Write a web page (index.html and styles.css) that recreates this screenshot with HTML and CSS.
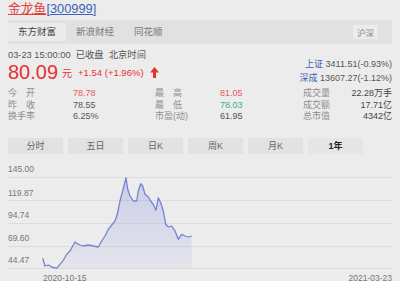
FILE: index.html
```html
<!DOCTYPE html>
<html>
<head>
<meta charset="utf-8">
<link rel="stylesheet" href="styles.css">
</head>
<body>
<div class="page">
  <div class="title"><a class="name">金龙鱼</a><a class="code">[300999]</a></div>
  <div class="tabbar">
    <span class="tab active">东方财富</span>
    <span class="tab">新浪财经</span>
    <span class="tab">同花顺</span>
    <span class="spacer"></span>
    <span class="market">沪深</span>
  </div>
  <div class="quote">
    <div class="qleft">
      <div class="time">03-23 15:00:00&nbsp; 已收盘&nbsp; 北京时间</div>
      <div class="priceline">
        <span class="price">80.09</span><span class="yuan">元</span>
        <span class="chg">+1.54 (+1.96%)</span>
        <svg class="arrow" width="9" height="11" viewBox="0 0 9 11"><path d="M4.5 0 L9 5.5 L6 5.5 L6 11 L3 11 L3 5.5 L0 5.5 Z" fill="#e5322f"/></svg>
      </div>
    </div>
    <div class="qright">
      <div class="idx"><span class="iname">上证</span> 3411.51(-0.93%)</div>
      <div class="idx"><span class="iname">深成</span> 13607.27(-1.12%)</div>
    </div>
  </div>
  <div class="stats">
    <span class="lb">今&emsp;开</span><span class="up">78.78</span>
    <span class="lb">最&emsp;高</span><span class="up">81.05</span>
    <span class="lb">成交量</span><span class="rv">22.28万手</span>
    <span class="lb">昨&emsp;收</span><span>78.55</span>
    <span class="lb">最&emsp;低</span><span class="down">78.03</span>
    <span class="lb">成交额</span><span class="rv">17.71亿</span>
    <span class="lb">换手率</span><span>6.25%</span>
    <span class="lb">市盈(动)</span><span>61.95</span>
    <span class="lb">总市值</span><span class="rv">4342亿</span>
  </div>
  <div class="periods">
    <span class="btn">分时</span>
    <span class="btn">五日</span>
    <span class="btn">日K</span>
    <span class="btn">周K</span>
    <span class="btn">月K</span>
    <span class="btn on">1年</span>
  </div>
  <svg class="chart" width="384" height="121" viewBox="0 0 384 121">
    <defs>
      <linearGradient id="fill" x1="0" y1="0" x2="0" y2="1">
        <stop offset="0" stop-color="#8b95e0" stop-opacity="0.35"/>
        <stop offset="1" stop-color="#8b95e0" stop-opacity="0.08"/>
      </linearGradient>
    </defs>
    <g stroke="#dcdcdf" stroke-width="1">
      <line x1="0" y1="16.5" x2="384" y2="16.5"/>
      <line x1="0" y1="39.5" x2="384" y2="39.5"/>
      <line x1="0" y1="62.5" x2="384" y2="62.5"/>
      <line x1="0" y1="85.5" x2="384" y2="85.5"/>
      <line x1="0" y1="107.5" x2="384" y2="107.5"/>
    </g>
    <g class="axis">
      <text x="0" y="11">145.00</text>
      <text x="0" y="35">119.87</text>
      <text x="0" y="57">94.74</text>
      <text x="0" y="80">69.60</text>
      <text x="0" y="102">44.47</text>
      <text x="35" y="120">2020-10-15</text>
      <text x="384" y="120" text-anchor="end">2021-03-23</text>
    </g>
    <path fill="url(#fill)" d="M34.7 97.3 L37 105 L40.3 104 L43.7 106 L48.7 107.3 L52 103.3 L55.3 99.3 L58.7 93.3 L62 90 L64.7 85 L67 81 L69.3 82.7 L72 84 L75.3 85 L80.3 84 L85.3 85 L90.3 86 L93.7 80 L97 75 L100.3 68.3 L103.7 64 L107 60 L109.3 53.3 L112 40 L113.7 33.3 L116 25 L118 16.7 L119.7 28.3 L122 35 L125.3 40 L128.7 40 L130.3 30 L132.7 22.7 L134.7 25 L137 33.3 L140.3 36 L142.7 40 L145.3 43.3 L148 49.3 L150.3 36.7 L152.7 41.7 L155.3 50 L157.7 63.3 L160.3 66 L163.7 65 L167 70 L170.3 78.3 L173.7 73.3 L177 75 L180.3 76 L183.7 75 L183.7 107 L34.7 107 Z"/>
    <path fill="none" stroke="#7783d2" stroke-width="1.3" stroke-linejoin="round" d="M34.7 97.3 L37 105 L40.3 104 L43.7 106 L48.7 107.3 L52 103.3 L55.3 99.3 L58.7 93.3 L62 90 L64.7 85 L67 81 L69.3 82.7 L72 84 L75.3 85 L80.3 84 L85.3 85 L90.3 86 L93.7 80 L97 75 L100.3 68.3 L103.7 64 L107 60 L109.3 53.3 L112 40 L113.7 33.3 L116 25 L118 16.7 L119.7 28.3 L122 35 L125.3 40 L128.7 40 L130.3 30 L132.7 22.7 L134.7 25 L137 33.3 L140.3 36 L142.7 40 L145.3 43.3 L148 49.3 L150.3 36.7 L152.7 41.7 L155.3 50 L157.7 63.3 L160.3 66 L163.7 65 L167 70 L170.3 78.3 L173.7 73.3 L177 75 L180.3 76 L183.7 75"/>
  </svg>
</div>
</body>
</html>
```
FILE: styles.css
```css
html, body {
  margin: 0;
  padding: 0;
  background: #ececec;
  overflow: hidden;
}
body {
  font-family: "Liberation Sans", "Noto Sans CJK SC", sans-serif;
  color: #555;
  font-size: 9px;
}
.page {
  padding: 0 8px;
  width: 384px;
}
.title {
  height: 18px;
  line-height: 18px;
  font-size: 12.8px;
}
.title a {
  text-decoration: underline;
}
.title .name {
  color: #e0403c;
}
.title .code {
  color: #3d63b5;
}
.tabbar {
  margin-top: 2px;
  height: 24px;
  background: #e1e1e1;
  display: flex;
  align-items: center;
}
.tab {
  height: 18px;
  line-height: 18px;
  padding: 0 10px;
  font-size: 9.5px;
  color: #777;
}
.tab.active {
  background: #ebebeb;
  color: #444;
}
.spacer {
  flex: 1;
}
.market {
  margin-right: 14px;
  padding: 1px 4px;
  font-size: 8.5px;
  color: #888;
  background: #ececec;
}
.quote {
  display: flex;
  justify-content: space-between;
  padding-top: 5px;
}
.time {
  line-height: 12px;
  font-size: 9.3px;
  color: #555;
}
.priceline {
  display: flex;
  align-items: center;
  height: 22px;
}
.price {
  font-size: 20px;
  color: #e5322f;
}
.yuan {
  font-size: 10px;
  color: #e5322f;
  margin-left: 4px;
}
.chg {
  font-size: 9.5px;
  color: #e5322f;
  margin-left: 6px;
}
.arrow {
  margin-left: 6px;
}
.qright {
  padding-top: 8px;
  text-align: right;
  color: #555;
}
.idx {
  line-height: 14px;
}
.iname {
  color: #3d63b5;
}
.stats {
  display: grid;
  grid-template-columns: 65px 82px 65px 83px 1fr auto;
  line-height: 11.5px;
  margin-top: 3px;
  color: #555;
}
.lb {
  color: #8e8e8e;
}
.up {
  color: #e0605a;
}
.down {
  color: #3fae8a;
}
.rv {
  text-align: right;
  color: #444;
}
.periods {
  margin-top: 15px;
  display: grid;
  grid-template-columns: repeat(6, 55px);
  gap: 5px;
}
.btn {
  height: 16px;
  line-height: 16px;
  text-align: center;
  background: #e2e2e2;
  color: #666;
}
.btn.on {
  background: #e6e6e6;
  color: #222;
  font-weight: bold;
}
.chart {
  display: block;
  margin-top: 7px;
}
.axis text {
  font-family: "Liberation Sans", sans-serif;
  font-size: 8.5px;
  fill: #777;
}
```
